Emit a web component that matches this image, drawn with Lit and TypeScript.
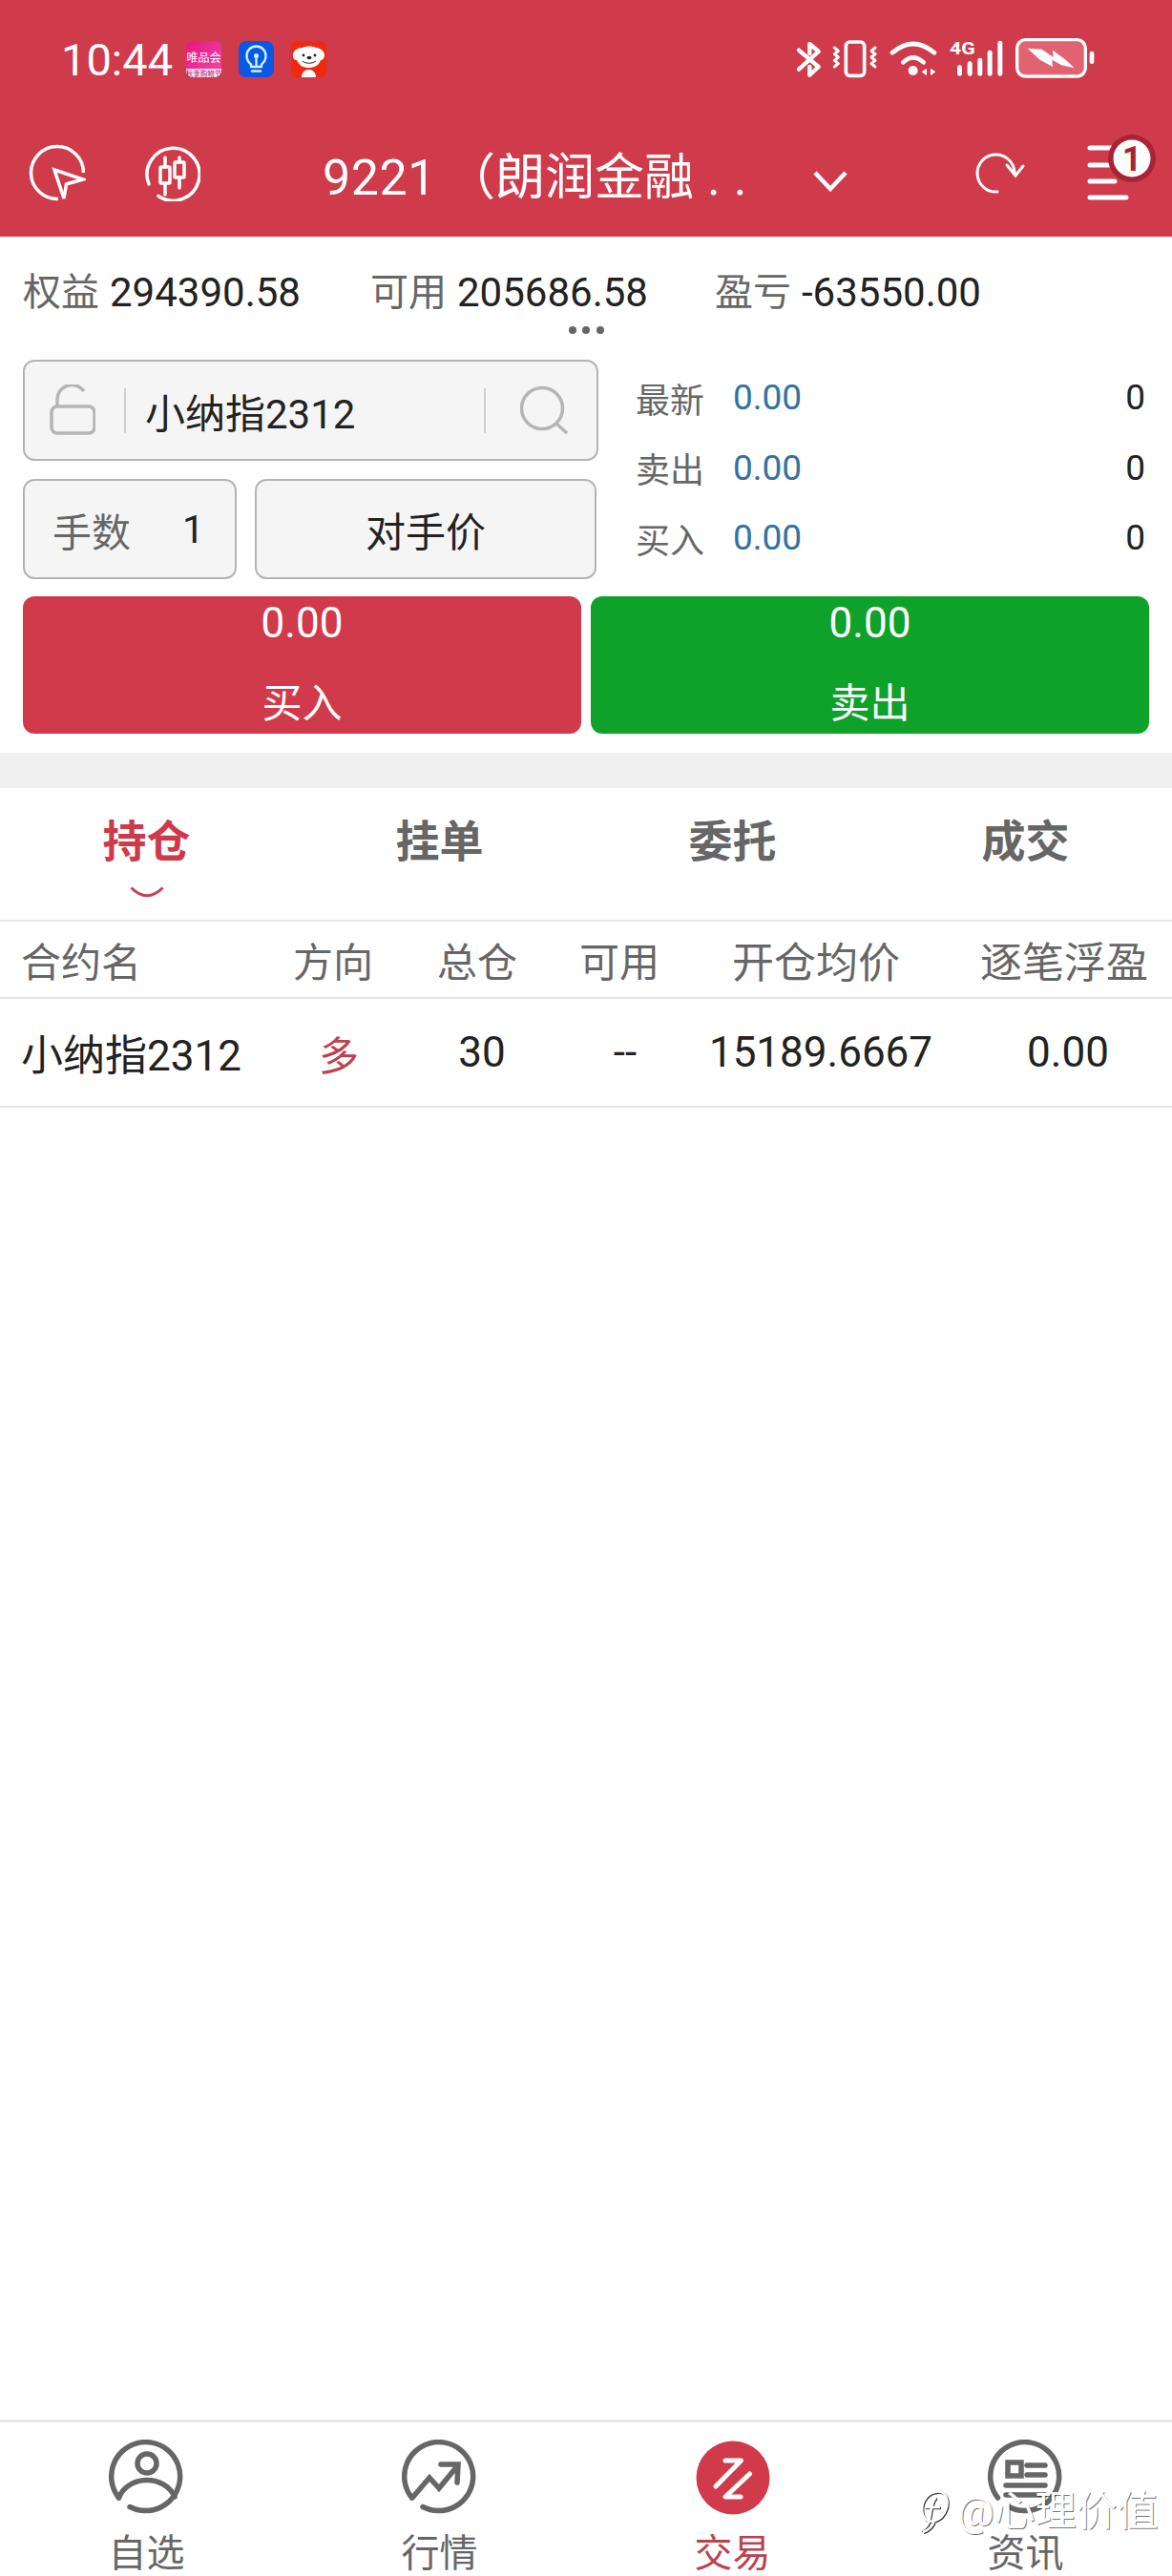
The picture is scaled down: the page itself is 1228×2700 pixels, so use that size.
import { LitElement, html, css, svg } from "lit";
import { customElement } from "lit/decorators.js";

const RED = "#cf3b4b";

const statusLeft = html`
  <svg class="note" viewBox="0 0 37 38">
    <defs>
      <linearGradient id="vp" x1="0" y1="0" x2="1" y2="1"><stop offset="0" stop-color="#ea1583"/><stop offset="1" stop-color="#f04aa8"/></linearGradient>
    </defs>
    <rect width="37" height="38" rx="7" fill="url(#vp)"/>
    <path d="M0 29H37V31a7 7 0 0 1-7 7H7a7 7 0 0 1-7-7Z" fill="#fbeef5"/>
    <text x="18.5" y="22" text-anchor="middle" font-size="12" fill="#fff" font-family="Noto Sans CJK SC">唯品会</text>
    <text x="18.5" y="36.5" text-anchor="middle" font-size="7.5" fill="#a3176f" font-family="Noto Sans CJK SC">秋季购物节</text>
  </svg>
  <svg class="note" viewBox="0 0 37 38">
    <rect width="37" height="38" rx="8" fill="#0b57e8"/>
    <g fill="none" stroke="#c9f3ff" stroke-width="2.4" stroke-linecap="round" stroke-linejoin="round">
      <path d="M13 24.5c-2.500-2-4.500-5-4.500-9a10 10 0 0 1 20 0c0 4-2 7-4.500 9v2.500h-11Z"/>
      <path d="M14 31.500h9"/><path d="M18.500 17v9"/>
    </g>
    <circle cx="18.500" cy="15.500" r="2.500" fill="#c9f3ff"/>
  </svg>
  <svg class="note" viewBox="0 0 37 38">
    <rect width="37" height="38" rx="6" fill="#f0290f"/>
    <path d="M2 13c2-5 7-6 10-6 4-2 10-2 14 0 3 0 8 2 9 7 0 4-2 6-4 6-2 6-7 8-13 8s-10-3-12-8c-3 0-5-3-4-7Z" fill="#fff"/>
    <path d="M11 38c0-5 3-8 7.500-8s7.500 3 7.500 8Z" fill="#fff"/>
    <circle cx="13" cy="15" r="1.400" fill="#222"/><circle cx="25" cy="15" r="1.400" fill="#222"/>
    <ellipse cx="19" cy="17.500" rx="2.500" ry="1.800" fill="#222"/>
    <path d="M12 21c3 3 10 3 14 0" fill="none" stroke="#222" stroke-width="1"/>
  </svg>`;

const statusRight = html`
  <svg class="sys" viewBox="45 45 975 165">
    <g fill="none" stroke="#fff" stroke-linecap="round" stroke-linejoin="round">
      <path stroke-width="13" d="M66 98L128 150L100 176L100 150M100 108L100 78L128 102L66 158"/>
      <rect x="214" y="72" width="58" height="106" rx="12" stroke-width="11"/>
      <path stroke-width="9" d="M178 90l12 10l-12 10l12 10l-12 10l12 10l-12 10"/>
      <path stroke-width="9" d="M306 90l-12 10l12 10l-12 10l12 10l-12 10l12 10"/>
      <path stroke-width="14" d="M360 106Q425 50 492 106"/>
      <path stroke-width="14" d="M394 136Q425 106 458 136"/>
      <rect x="752" y="65" width="215" height="115" rx="26" stroke-width="10" fill="#e0636f"/>
      <path stroke-width="14" d="M987 108V134"/>
    </g>
    <circle cx="425" cy="162" r="15" fill="#fff"/>
    <path d="M468 155V178L452 166ZM480 155V178L496 166Z" fill="#fff"/>
    <text x="540" y="110" font-size="54" font-weight="700" fill="#fff" font-family="Roboto" textLength="80" lengthAdjust="spacingAndGlyphs">4G</text>
    <g fill="#fff">
      <rect x="564" y="145" width="15" height="34" rx="7"/>
      <rect x="596" y="133" width="15" height="46" rx="7"/>
      <rect x="628" y="122" width="15" height="57" rx="7"/>
      <rect x="659" y="98" width="15" height="81" rx="7"/>
      <rect x="691" y="68" width="15" height="111" rx="7"/>
      <path d="M785 92L830 95L866 120L864 98L905 128L932 154L892 145L862 128L864 150L824 128Z"/>
    </g>
  </svg>`;

const cursorIcon = svg`<svg class="nav-ic" viewBox="30 151 60 60"><g fill="none" stroke="#fff" stroke-width="3.500" stroke-linejoin="miter"><path d="M87.500 181A27.500 27.500 0 1 0 61 208.500"/><path d="M57 178L87 188L69.500 193L67 208Z"/></g></svg>`;
const candleIcon = svg`<svg class="nav-ic ml60" viewBox="150 151 60 60"><g fill="none" stroke="#fff" stroke-width="3.500" stroke-linecap="round"><path d="M166 205.500A27.500 27.500 0 1 0 156 193"/><rect x="168" y="175" width="10" height="17" rx="1"/><rect x="183" y="170" width="10" height="16" rx="1"/><path d="M173 165V175M173 192V204M188 165V170M188 186V197"/></g></svg>`;

const tabIcons: Record<string, unknown> = {
  person: svg`<path d="M10.500 61A36 36 0 1 1 22 70.500"/><circle cx="40" cy="25" r="10"/><path d="M10.500 61A31 27 0 0 1 69 60"/>`,
  chart: svg`<path d="M10.500 61A36 36 0 1 1 22 70.500"/><path d="M11 61L29 40L39 51L58 28"/><path d="M41 26H59L58 45"/>`,
  news: svg`<path d="M10.500 61A36 36 0 1 1 22 70.500"/><rect x="21" y="24" width="14" height="14"/><path d="M41 27H60M41 37H60M19 48H60M19 58H60"/>`,
};

@customElement("app-root")
export class AppRoot extends LitElement {
  static styles = css`
    :host {
      display: flex;
      flex-direction: column;
      position: relative;
      width: 1228px;
      height: 2700px;
      background: #fff;
      overflow: hidden;
      font-family: Roboto, "Noto Sans CJK SC", sans-serif;
      color: #222;
    }
    svg { display: block; flex: none; }

    .top { background: ${css([RED] as unknown as TemplateStringsArray)}; height: 248px; color: #fff; }
    .status { height: 124px; display: flex; align-items: center; padding: 0 0 0 64px; }
    .time { font-size: 47px; font-weight: 400; width: 131px; line-height: 1; }
    .note { width: 37px; height: 38px; margin-right: 18px; }
    .sys { width: 325px; height: 55px; margin-left: 470px; }

    .nav { height: 124px; display: flex; align-items: flex-start; padding: 27px 0 0 30px; box-sizing: border-box; }
    .nav-ic { width: 60px; height: 60px; }
    .ml60 { margin-left: 60px; }
    .title { width: 508px; margin-left: 128px; font-size: 52px; line-height: 60px; margin-top: 6px; white-space: nowrap; }
    .title .num { letter-spacing: 0.5px; margin-right: 10px; }
    .title .dots { letter-spacing: 14px; margin-left: 14px; }
    .chev { width: 48px; height: 60px; }
    .refresh { width: 60px; height: 60px; margin-left: 126px; }
    .menu { width: 80px; height: 80px; margin-left: 55px; margin-top: -10px; }

    .info { display: grid; grid-template-columns: 364px 361px 1fr; padding: 29px 0 0 24px; height: 60px; box-sizing: content-box; }
    .info-item { display: flex; gap: 11px; align-items: center; font-size: 42px; line-height: 60px; white-space: nowrap; }
    .info-item .k { color: #666; font-size: 40px; }
    .more { display: flex; gap: 6.500px; justify-content: center; margin: 5px 0 27px; }
    .more i { width: 8px; height: 8px; border-radius: 50%; background: #666; }

    .trade { display: flex; padding-left: 24px; height: 230px; }
    .left { width: 603px; display: flex; flex-direction: column; gap: 19px; }
    .box { box-sizing: border-box; border: 2px solid #b4b4b4; border-radius: 12px; background: #f5f5f5; display: flex; align-items: center; }
    .search { height: 106px; padding-left: 26px; font-size: 42px; color: #222; }
    .search .vl { width: 2px; height: 47px; background: #cfcfcf; }
    .search .vl1 { margin: 0 20px 0 30px; }
    .search .code { width: 355px; }
    .search .vl2 { margin-right: 36px; }
    .row2 { display: flex; gap: 19px; }
    .hands { width: 224px; height: 105px; padding-left: 29px; font-size: 41px; color: #666; }
    .hands b { font-weight: 400; color: #222; margin-left: 54px; }
    .rival { width: 358px; height: 105px; justify-content: center; font-size: 42px; color: #222; }

    .quotes { margin-left: 39px; width: 534px; padding-top: 3px; }
    .q { display: flex; align-items: center; height: 73.500px; font-size: 36px; }
    .q .k { width: 102px; color: #666; }
    .q .v { flex: 1; color: #34729f; font-size: 37px; }
    .q .n { color: #222; font-size: 37px; }

    .btns { display: flex; gap: 10px; padding: 18px 24px 0; }
    .btn { flex: 1; height: 144px; border-radius: 12px; color: #fff; display: flex; flex-direction: column; align-items: center; box-sizing: border-box; }
    .btn .p { height: 56px; line-height: 56px; font-size: 44px; }
    .btn .l { height: 58px; line-height: 58px; margin-top: 28px; font-size: 42px; }
    .buy { background: #d03a4a; }
    .sell { background: #0ea22a; }

    .band { height: 37px; background: #f0f0f0; margin-top: 20px; }

    .tabs { display: grid; grid-template-columns: repeat(4, 1fr); height: 138px; border-bottom: 2px solid #e6e6e6; }
    .tab { display: flex; flex-direction: column; align-items: center; padding-top: 30px; font-size: 46px; font-weight: 700; line-height: 52px; color: #666; }
    .tab.on { color: #cd3a4a; }
    .tab svg { width: 36px; height: 12px; margin-top: 21px; }

    .tr { display: flex; align-items: center; border-bottom: 2px solid #e6e6e6; }
    .tr > div { text-align: center; white-space: nowrap; }
    .tr > div:first-child { text-align: left; padding-left: 22px; box-sizing: border-box; }
    .head { height: 79px; font-size: 42px; color: #666; }
    .head .c0 { width: 288px; } .head .c1 { width: 122px; } .head .c2 { width: 180px; }
    .head .c3 { width: 118px; } .head .c4 { width: 294px; font-size: 44px; } .head .c5 { width: 226px; font-size: 44px; }
    .data { height: 112px; font-size: 44px; color: #222; }
    .data .c0 { width: 300px; } .data .c1 { width: 110px; color: #c0404f; font-size: 42px; } .data .c2 { width: 190px; }
    .data .c3 { width: 110px; } .data .c4 { width: 300px; } .data .c5 { width: 218px; }

    .fill { flex: 1; }

    .bottom { display: grid; grid-template-columns: repeat(4, 1fr); height: 161px; border-top: 3px solid #e8e8e8; box-sizing: content-box; }
    .bt { display: flex; flex-direction: column; align-items: center; padding-top: 18px; color: #666; font-size: 40px; line-height: 40px; }
    .bt svg { width: 80px; height: 80px; margin-bottom: 20px; }
    .bt.on { color: #b8434f; }
    .bt svg.ln { fill: none; stroke: #666; stroke-width: 5.500; stroke-linecap: round; stroke-linejoin: miter; }

    .mark { position: absolute; left: 961px; top: 2606px; display: flex; align-items: center; gap: 4px; font-size: 43px; line-height: 52px; color: #fff; text-shadow: 1px 1px 0 rgba(0, 0, 0, 0.55); white-space: nowrap; }
    .mark svg { width: 38px; height: 52px; }
  `;

  private tab(icon: string, label: string) {
    return html`<div class="bt">
      <svg class="ln" viewBox="0 0 80 80">${tabIcons[icon]}</svg>
      ${label}
    </div>`;
  }

  render() {
    return html`
      <div class="top">
        <div class="status">
          <div class="time">10:44</div>
          ${statusLeft}
          ${statusRight}
        </div>
        <div class="nav">
          ${cursorIcon}
          ${candleIcon}
          <div class="title"><span class="num">9221</span>（朗润金融<span class="dots">..</span></div>
          <svg class="chev" viewBox="846 151 48 60"><path d="M854 181L870 198L886 181" fill="none" stroke="#fff" stroke-width="4.500"/></svg>
          <svg class="refresh" viewBox="1020 151 60 60"><g fill="none" stroke="#fff" stroke-width="3" stroke-linecap="round"><path d="M1045 201A19.500 19.500 0 1 1 1063 181"/><path d="M1055 173L1064 184L1072 174"/></g></svg>
          <svg class="menu" viewBox="1135 141 80 80">
            <path d="M1142 155H1175M1142 173H1175M1142 190H1168M1142 207H1180" stroke="#fff" stroke-width="5" stroke-linecap="round"/>
            <circle cx="1186" cy="166" r="25" fill="#a92336"/>
            <circle cx="1186" cy="166" r="19.500" fill="#fff"/>
            <text x="1186" y="179" text-anchor="middle" font-size="36" font-weight="700" fill="#a92336" font-family="Roboto">1</text>
          </svg>
        </div>
      </div>

      <div class="info">
        <div class="info-item"><span class="k">权益</span><span>294390.58</span></div>
        <div class="info-item"><span class="k">可用</span><span>205686.58</span></div>
        <div class="info-item"><span class="k">盈亏</span><span>-63550.00</span></div>
      </div>
      <div class="more"><i></i><i></i><i></i></div>

      <div class="trade">
        <div class="left">
          <div class="box search">
            <svg width="48" height="54" viewBox="52 404 48 54"><g fill="none" stroke="#b5b5b5" stroke-width="3.500"><rect x="54" y="427" width="45" height="28" rx="6"/><path d="M60 427V422A15.500 15.500 0 0 1 88 411"/></g></svg>
            <span class="vl vl1"></span>
            <span class="code">小纳指2312</span>
            <span class="vl vl2"></span>
            <svg width="50" height="52" viewBox="543 404 50 52"><g fill="none" stroke="#b5b5b5" stroke-width="3.500"><circle cx="566" cy="428" r="21.500"/><path d="M581 444L592 454"/></g></svg>
          </div>
          <div class="row2">
            <div class="box hands">手数<b>1</b></div>
            <div class="box rival">对手价</div>
          </div>
        </div>
        <div class="quotes">
          <div class="q"><span class="k">最新</span><span class="v">0.00</span><span class="n">0</span></div>
          <div class="q"><span class="k">卖出</span><span class="v">0.00</span><span class="n">0</span></div>
          <div class="q"><span class="k">买入</span><span class="v">0.00</span><span class="n">0</span></div>
        </div>
      </div>

      <div class="btns">
        <div class="btn buy"><span class="p">0.00</span><span class="l">买入</span></div>
        <div class="btn sell"><span class="p">0.00</span><span class="l">卖出</span></div>
      </div>

      <div class="band"></div>

      <div class="tabs">
        <div class="tab on">持仓<svg viewBox="0 0 36 12"><path d="M1.500 1.500Q18 18 34.500 1.500" fill="none" stroke="#c8404f" stroke-width="3"/></svg></div>
        <div class="tab">挂单</div>
        <div class="tab">委托</div>
        <div class="tab">成交</div>
      </div>

      <div class="tr head">
        <div class="c0">合约名</div><div class="c1">方向</div><div class="c2">总仓</div>
        <div class="c3">可用</div><div class="c4">开仓均价</div><div class="c5">逐笔浮盈</div>
      </div>
      <div class="tr data">
        <div class="c0">小纳指2312</div><div class="c1">多</div><div class="c2">30</div>
        <div class="c3">--</div><div class="c4">15189.6667</div><div class="c5">0.00</div>
      </div>

      <div class="fill"></div>

      <div class="bottom">
        ${this.tab("person", "自选")}
        ${this.tab("chart", "行情")}
        <div class="bt on">
          <svg viewBox="0 0 80 80">
            <circle cx="40" cy="40" r="38.500" fill="#d03a4a"/>
            <path d="M32 22H48.500L22 49M57.500 36L32 60H48" fill="none" stroke="#fff" stroke-width="5" stroke-linecap="round" stroke-linejoin="round"/>
          </svg>
          交易
        </div>
        ${this.tab("news", "资讯")}
      </div>

      <div class="mark">
        <svg viewBox="0 0 38 52"><path d="M19 6C8 8 3 20 6 30C8 36 14 38 19 36C30 32 34 18 30 10C28 6 23 5 19 6ZM18 36C16 42 12 46 6 48M8 22H24M20 12C15 14 15 24 13 34C12 40 9 44 4 46" fill="none" stroke="#fff" stroke-width="2.500" style="filter:drop-shadow(1px 1px 0 #333)"/></svg>
        <span>@心理价值</span>
      </div>
    `;
  }
}
